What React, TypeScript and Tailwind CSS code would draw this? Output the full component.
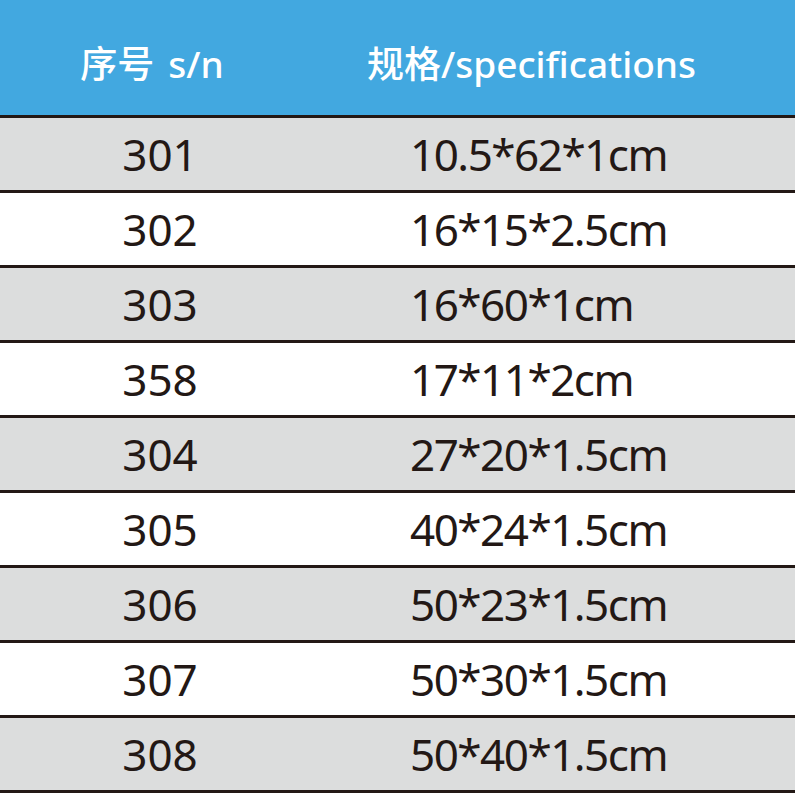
const rows: [string, string][] = [
  ["301", "10.5*62*1cm"],
  ["302", "16*15*2.5cm"],
  ["303", "16*60*1cm"],
  ["358", "17*11*2cm"],
  ["304", "27*20*1.5cm"],
  ["305", "40*24*1.5cm"],
  ["306", "50*23*1.5cm"],
  ["307", "50*30*1.5cm"],
  ["308", "50*40*1.5cm"],
];

export default function App() {
  return (
    <div className="w-[795px] h-[795px] bg-white overflow-hidden font-['Noto_Sans','Noto_Sans_CJK_SC',sans-serif]">
      {/* header */}
      <div className="grid grid-cols-[304px_1fr] h-[115px] bg-[#42a8e0] text-white font-medium text-[37px]">
        <div className="flex items-center justify-center pt-[12px]">
          <span>序号</span>
          <span className="ml-[14px]">s/n</span>
        </div>
        <div className="flex items-center justify-center pt-[12px] pr-[36px]">
          规格/specifications
        </div>
      </div>

      {rows.map(([sn, spec], i) => (
        <div
          key={sn}
          className={`grid grid-cols-[320px_1fr] h-[75px] border-t-[3px] border-[#231815] text-[#231815] text-[44px] ${
            i % 2 === 0 ? "bg-[#dcdddd]" : "bg-white"
          }`}
        >
          <div className="flex items-center justify-center">{sn}</div>
          <div className="flex items-center pl-[90px] tracking-[-1.5px]">{spec}</div>
        </div>
      ))}
      <div className="h-[3px] bg-[#231815]" />
    </div>
  );
}
